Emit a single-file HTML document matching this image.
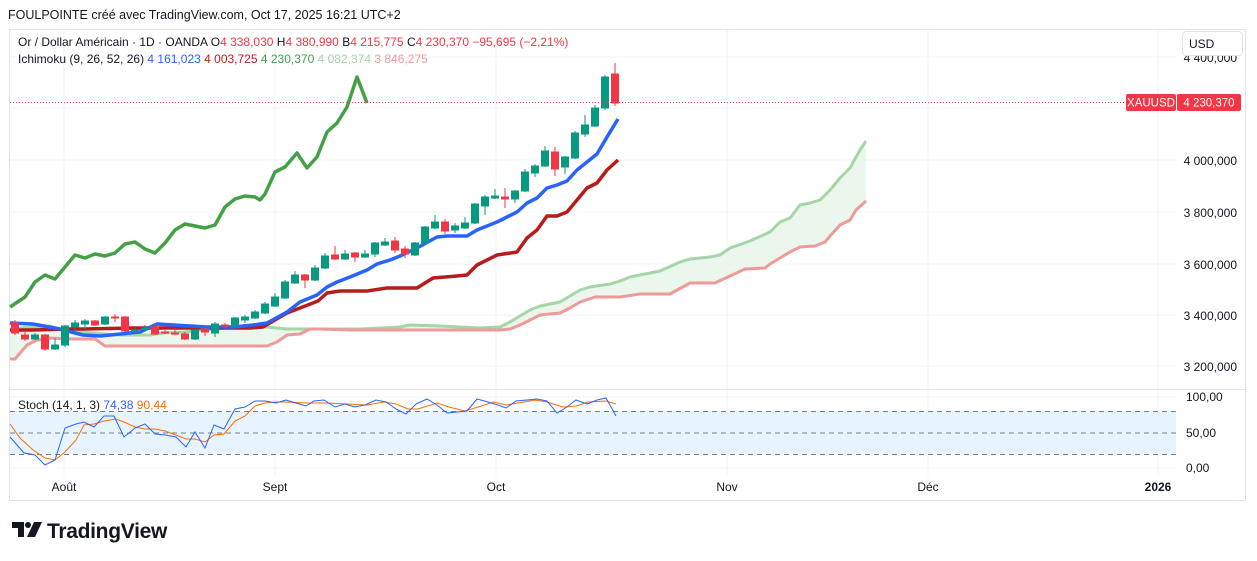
<!DOCTYPE html>
<html><head><meta charset="utf-8"><style>
body{margin:0;width:1257px;height:561px;background:#fff;overflow:hidden;font-family:"Liberation Sans",sans-serif;}
svg{position:absolute;left:0;top:0}
</style></head><body>
<svg width="1257" height="561" viewBox="0 0 1257 561" font-family="Liberation Sans, sans-serif">
<text x="8" y="19" font-size="12.5" fill="#131722">FOULPOINTE créé avec TradingView.com, Oct 17, 2025 16:21 UTC+2</text>
<rect x="9.5" y="29.5" width="1236" height="471" fill="none" stroke="#e0e3eb"/>
<g stroke="#f0f3fa" stroke-width="1">
<line x1="10" y1="57" x2="1176" y2="57"/><line x1="10" y1="108" x2="1176" y2="108"/><line x1="10" y1="160" x2="1176" y2="160"/><line x1="10" y1="212" x2="1176" y2="212"/><line x1="10" y1="264" x2="1176" y2="264"/><line x1="10" y1="315" x2="1176" y2="315"/><line x1="10" y1="366" x2="1176" y2="366"/>
<line x1="10" y1="397" x2="1176" y2="397"/><line x1="10" y1="468" x2="1176" y2="468"/>
<line x1="64" y1="30" x2="64" y2="475"/><line x1="275" y1="30" x2="275" y2="475"/><line x1="496" y1="30" x2="496" y2="475"/><line x1="727" y1="30" x2="727" y2="475"/><line x1="928" y1="30" x2="928" y2="475"/><line x1="1158" y1="30" x2="1158" y2="475"/>
</g>
<line x1="10" y1="389.5" x2="1245" y2="389.5" stroke="#e0e3eb"/>
<polygon fill="#e8f5e9" fill-opacity="0.85" points="10,330 20,328 33,327 50,326 60,330 83,332 117,335 150,335 163,333 183,332 217,329 233,327 267,327 277,328 287,329 318,329 330,329 360,329 400,327 410,325 440,326 480,328 500,327 510,322 520,316 530,310 540,306 560,302 570,296 580,290 590,287 610,284 620,281 630,277 650,273 660,271 680,262 690,259 710,257 720,255 730,248 750,241 770,232 780,222 790,218 800,205 810,203 820,200 830,190 840,178 850,168 860,150 866,141 866,201 856,210 850,220 840,225 830,236 825,242 815,246 800,247 790,252 780,258 770,264 765,268 745,269 730,276 715,283 690,283 670,294 640,294 620,297 595,297 580,302 570,308 560,313 540,315 530,320 520,325 510,329 500,330 350,330 320,329 310,329 300,334 287,335 277,342 267,346 105,346 95,339 67,339 50,338 37,340 27,345 15,359 10,359"/>
<polyline fill="none" stroke="#a5d6a7" stroke-width="3" stroke-linejoin="round" points="10,330 20,328 33,327 50,326 60,330 83,332 117,335 150,335 163,333 183,332 217,329 233,327 267,327 277,328 287,329 318,329 330,329 360,329 400,327 410,325 440,326 480,328 500,327 510,322 520,316 530,310 540,306 560,302 570,296 580,290 590,287 610,284 620,281 630,277 650,273 660,271 680,262 690,259 710,257 720,255 730,248 750,241 770,232 780,222 790,218 800,205 810,203 820,200 830,190 840,178 850,168 860,150 866,141"/>
<polyline fill="none" stroke="#ef9a9a" stroke-width="3" stroke-linejoin="round" points="10,359 15,359 27,345 37,340 50,338 67,339 95,339 105,346 267,346 277,342 287,335 300,334 310,329 320,329 350,330 500,330 510,329 520,325 530,320 540,315 560,313 570,308 580,302 595,297 620,297 640,294 670,294 690,283 715,283 730,276 745,269 765,268 770,264 780,258 790,252 800,247 815,246 825,242 830,236 840,225 850,220 856,210 866,201"/>
<polyline fill="none" stroke="#43a047" stroke-width="3.5" stroke-linejoin="round" points="10,307 25,297 35,282 45,275 55,279 75,255 85,258 95,254 105,256 115,253 125,244 135,242 145,249 155,253 165,243 175,230 185,224 195,226 205,228 215,225 225,207 235,199 245,196 255,197 260,200 265,194 275,172 285,167 297,153 307,168 317,157 327,132 337,123 347,107 357,77 367,103"/>
<polyline fill="none" stroke="#b71c1c" stroke-width="3.5" stroke-linejoin="round" points="10,330 33,330 67,329 83,329 133,328 200,328 250,328 263,327 287,313 300,308 318,301 327,293 340,291 367,291 387,288 417,288 433,278 457,276 467,275 477,265 497,255 517,252 527,238 537,230 547,216 557,216 567,212 577,200 587,188 597,183 607,170 618,160"/>
<polyline fill="none" stroke="#2962ff" stroke-width="3.5" stroke-linejoin="round" points="10,323 33,324 60,329 83,335 100,336 140,332 157,324 207,327 233,327 253,325 267,323 287,312 300,302 317,295 327,287 337,282 350,277 367,270 377,264 390,260 400,256 417,248 437,237 447,236 467,236 477,230 487,226 497,222 507,217 517,212 527,203 537,198 547,188 557,185 567,181 577,170 587,162 597,154 607,137 618,119"/>
<g stroke-width="1">
<g stroke="#f23645" fill="#f23645"><line x1="15" y1="320" x2="15" y2="335"/><rect x="11.5" y="323" width="7" height="10"/></g>
<g stroke="#f23645" fill="#f23645"><line x1="25" y1="332" x2="25" y2="341"/><rect x="21.5" y="335" width="7" height="4"/></g>
<g stroke="#089981" fill="#089981"><line x1="35" y1="333" x2="35" y2="340"/><rect x="31.5" y="335" width="7" height="4"/></g>
<g stroke="#f23645" fill="#f23645"><line x1="45" y1="334" x2="45" y2="351"/><rect x="41.5" y="335" width="7" height="14"/></g>
<g stroke="#089981" fill="#089981"><line x1="55" y1="338" x2="55" y2="350"/><rect x="51.5" y="345" width="7" height="4"/></g>
<g stroke="#089981" fill="#089981"><line x1="65" y1="325" x2="65" y2="347"/><rect x="61.5" y="326" width="7" height="19"/></g>
<g stroke="#089981" fill="#089981"><line x1="75" y1="320" x2="75" y2="331"/><rect x="71.5" y="323" width="7" height="4"/></g>
<g stroke="#089981" fill="#089981"><line x1="85" y1="319" x2="85" y2="329"/><rect x="81.5" y="321" width="7" height="3"/></g>
<g stroke="#f23645" fill="#f23645"><line x1="95" y1="320" x2="95" y2="326"/><rect x="91.5" y="321" width="7" height="4"/></g>
<g stroke="#089981" fill="#089981"><line x1="105" y1="316" x2="105" y2="325"/><rect x="101.5" y="317" width="7" height="7"/></g>
<g stroke="#f23645" fill="#f23645"><line x1="115" y1="314" x2="115" y2="322"/><rect x="111.5" y="317" width="7" height="1"/></g>
<g stroke="#f23645" fill="#f23645"><line x1="125" y1="316" x2="125" y2="332"/><rect x="121.5" y="317" width="7" height="14"/></g>
<g stroke="#089981" fill="#089981"><line x1="135" y1="327" x2="135" y2="333"/><rect x="131.5" y="330" width="7" height="1"/></g>
<g stroke="#089981" fill="#089981"><line x1="145" y1="325" x2="145" y2="330"/><rect x="141.5" y="328" width="7" height="1.5"/></g>
<g stroke="#f23645" fill="#f23645"><line x1="155" y1="323" x2="155" y2="335"/><rect x="151.5" y="327" width="7" height="7"/></g>
<g stroke="#f23645" fill="#f23645"><line x1="165" y1="329" x2="165" y2="334"/><rect x="161.5" y="332" width="7" height="1"/></g>
<g stroke="#f23645" fill="#f23645"><line x1="175" y1="328" x2="175" y2="335"/><rect x="171.5" y="333" width="7" height="1"/></g>
<g stroke="#f23645" fill="#f23645"><line x1="185" y1="332" x2="185" y2="340"/><rect x="181.5" y="334" width="7" height="5"/></g>
<g stroke="#089981" fill="#089981"><line x1="195" y1="329" x2="195" y2="340"/><rect x="191.5" y="330" width="7" height="9"/></g>
<g stroke="#f23645" fill="#f23645"><line x1="205" y1="328" x2="205" y2="336"/><rect x="201.5" y="329" width="7" height="3"/></g>
<g stroke="#089981" fill="#089981"><line x1="215" y1="322" x2="215" y2="337"/><rect x="211.5" y="324" width="7" height="9"/></g>
<g stroke="#f23645" fill="#f23645"><line x1="225" y1="323" x2="225" y2="328"/><rect x="221.5" y="325" width="7" height="1"/></g>
<g stroke="#089981" fill="#089981"><line x1="235" y1="317" x2="235" y2="327"/><rect x="231.5" y="318" width="7" height="8"/></g>
<g stroke="#089981" fill="#089981"><line x1="245" y1="315" x2="245" y2="323"/><rect x="241.5" y="317" width="7" height="3"/></g>
<g stroke="#089981" fill="#089981"><line x1="255" y1="310" x2="255" y2="319"/><rect x="251.5" y="312" width="7" height="6"/></g>
<g stroke="#089981" fill="#089981"><line x1="265" y1="302" x2="265" y2="314"/><rect x="261.5" y="304" width="7" height="9"/></g>
<g stroke="#089981" fill="#089981"><line x1="275" y1="293" x2="275" y2="307"/><rect x="271.5" y="297" width="7" height="9"/></g>
<g stroke="#089981" fill="#089981"><line x1="285" y1="280" x2="285" y2="299"/><rect x="281.5" y="282" width="7" height="16"/></g>
<g stroke="#089981" fill="#089981"><line x1="295" y1="271" x2="295" y2="284"/><rect x="291.5" y="275" width="7" height="8"/></g>
<g stroke="#f23645" fill="#f23645"><line x1="305" y1="274" x2="305" y2="288"/><rect x="301.5" y="275" width="7" height="5"/></g>
<g stroke="#089981" fill="#089981"><line x1="315" y1="265" x2="315" y2="281"/><rect x="311.5" y="268" width="7" height="12"/></g>
<g stroke="#089981" fill="#089981"><line x1="325" y1="253" x2="325" y2="269"/><rect x="321.5" y="256" width="7" height="12"/></g>
<g stroke="#f23645" fill="#f23645"><line x1="335" y1="246" x2="335" y2="260"/><rect x="331.5" y="255" width="7" height="4"/></g>
<g stroke="#089981" fill="#089981"><line x1="345" y1="250" x2="345" y2="260"/><rect x="341.5" y="254" width="7" height="5"/></g>
<g stroke="#f23645" fill="#f23645"><line x1="355" y1="252" x2="355" y2="262"/><rect x="351.5" y="253" width="7" height="4"/></g>
<g stroke="#089981" fill="#089981"><line x1="365" y1="250" x2="365" y2="258"/><rect x="361.5" y="254" width="7" height="3"/></g>
<g stroke="#089981" fill="#089981"><line x1="375" y1="242" x2="375" y2="257"/><rect x="371.5" y="243" width="7" height="11"/></g>
<g stroke="#089981" fill="#089981"><line x1="385" y1="238" x2="385" y2="246"/><rect x="381.5" y="242" width="7" height="3"/></g>
<g stroke="#f23645" fill="#f23645"><line x1="395" y1="237" x2="395" y2="253"/><rect x="391.5" y="241" width="7" height="9"/></g>
<g stroke="#f23645" fill="#f23645"><line x1="405" y1="246" x2="405" y2="258"/><rect x="401.5" y="249" width="7" height="5"/></g>
<g stroke="#089981" fill="#089981"><line x1="415" y1="242" x2="415" y2="256"/><rect x="411.5" y="243" width="7" height="12"/></g>
<g stroke="#089981" fill="#089981"><line x1="425" y1="226" x2="425" y2="244"/><rect x="421.5" y="227" width="7" height="16"/></g>
<g stroke="#089981" fill="#089981"><line x1="435" y1="215" x2="435" y2="229"/><rect x="431.5" y="222" width="7" height="6"/></g>
<g stroke="#f23645" fill="#f23645"><line x1="445" y1="219" x2="445" y2="234"/><rect x="441.5" y="222" width="7" height="9"/></g>
<g stroke="#089981" fill="#089981"><line x1="455" y1="223" x2="455" y2="233"/><rect x="451.5" y="226" width="7" height="4"/></g>
<g stroke="#089981" fill="#089981"><line x1="465" y1="217" x2="465" y2="229"/><rect x="461.5" y="223" width="7" height="5"/></g>
<g stroke="#089981" fill="#089981"><line x1="475" y1="203" x2="475" y2="224"/><rect x="471.5" y="204" width="7" height="19"/></g>
<g stroke="#089981" fill="#089981"><line x1="485" y1="195" x2="485" y2="215"/><rect x="481.5" y="197" width="7" height="9"/></g>
<g stroke="#089981" fill="#089981"><line x1="495" y1="189" x2="495" y2="199"/><rect x="491.5" y="196" width="7" height="2"/></g>
<g stroke="#f23645" fill="#f23645"><line x1="505" y1="188" x2="505" y2="208"/><rect x="501.5" y="197" width="7" height="2"/></g>
<g stroke="#089981" fill="#089981"><line x1="515" y1="190" x2="515" y2="203"/><rect x="511.5" y="191" width="7" height="8"/></g>
<g stroke="#089981" fill="#089981"><line x1="525" y1="169" x2="525" y2="192"/><rect x="521.5" y="172" width="7" height="19"/></g>
<g stroke="#089981" fill="#089981"><line x1="535" y1="164" x2="535" y2="177"/><rect x="531.5" y="166" width="7" height="7"/></g>
<g stroke="#089981" fill="#089981"><line x1="545" y1="146" x2="545" y2="167"/><rect x="541.5" y="151" width="7" height="15"/></g>
<g stroke="#f23645" fill="#f23645"><line x1="555" y1="147" x2="555" y2="176"/><rect x="551.5" y="152" width="7" height="17"/></g>
<g stroke="#089981" fill="#089981"><line x1="565" y1="156" x2="565" y2="174"/><rect x="561.5" y="157" width="7" height="10"/></g>
<g stroke="#089981" fill="#089981"><line x1="575" y1="131" x2="575" y2="159"/><rect x="571.5" y="133" width="7" height="25"/></g>
<g stroke="#089981" fill="#089981"><line x1="585" y1="115" x2="585" y2="137"/><rect x="581.5" y="125" width="7" height="9"/></g>
<g stroke="#089981" fill="#089981"><line x1="595" y1="105" x2="595" y2="127"/><rect x="591.5" y="108" width="7" height="18"/></g>
<g stroke="#089981" fill="#089981"><line x1="605" y1="75" x2="605" y2="110"/><rect x="601.5" y="77" width="7" height="31"/></g>
<g stroke="#f23645" fill="#f23645"><line x1="615" y1="63" x2="615" y2="106"/><rect x="611.5" y="74" width="7" height="29"/></g>
</g>
<line x1="10" y1="102.5" x2="1126" y2="102.5" stroke="#f23645" stroke-dasharray="1,2"/>
<rect x="1126" y="94" width="50" height="17" rx="2" fill="#f23645"/>
<text x="1151" y="106.5" font-size="11.5" fill="#fff" text-anchor="middle">XAUUSD</text>
<rect x="1177" y="94" width="64" height="17" rx="2" fill="#f23645"/>
<text x="1209" y="106.5" font-size="11.5" fill="#fff" text-anchor="middle">4 230,370</text>
<text x="18" y="46" font-size="12" fill="#131722">Or / Dollar Américain · 1D · OANDA <tspan fill="#131722">O</tspan><tspan fill="#f23645">4 338,030</tspan> <tspan fill="#131722">H</tspan><tspan fill="#f23645">4 380,990</tspan> <tspan fill="#131722">B</tspan><tspan fill="#f23645">4 215,775</tspan> <tspan fill="#131722">C</tspan><tspan fill="#f23645">4 230,370</tspan> <tspan fill="#f23645">−95,695 (−2,21%)</tspan></text>
<text x="18" y="63" font-size="12" fill="#131722">Ichimoku (9, 26, 52, 26) <tspan fill="#2962ff">4 161,023</tspan>  <tspan fill="#b71c1c">4 003,725</tspan>  <tspan fill="#43a047">4 230,370</tspan>  <tspan fill="#a5d6a7">4 082,374</tspan>  <tspan fill="#ef9a9a">3 846,275</tspan></text>
<g font-size="12" fill="#131722" text-anchor="end">
<text x="1237" y="62">4 400,000</text>
<text x="1237" y="165">4 000,000</text>
<text x="1237" y="217">3 800,000</text>
<text x="1237" y="269">3 600,000</text>
<text x="1237" y="320">3 400,000</text>
<text x="1237" y="371">3 200,000</text>
</g>
<rect x="1182.5" y="31.5" width="60" height="24" rx="4" fill="#fff" stroke="#e0e3eb"/>
<text x="1189" y="48" font-size="12" fill="#131722">USD</text>
<g font-size="12" fill="#131722">
<text x="1186" y="401">100,00</text><text x="1186" y="437">50,00</text><text x="1186" y="472">0,00</text>
</g>
<rect x="10" y="411" width="1166" height="43" fill="#e3f2fd" fill-opacity="0.85"/>
<g stroke="#787b86" stroke-dasharray="5,4" stroke-width="1">
<line x1="10" y1="411.5" x2="1176" y2="411.5"/><line x1="10" y1="433" x2="1176" y2="433"/><line x1="10" y1="454.5" x2="1176" y2="454.5"/>
</g>
<polyline fill="none" stroke="#ff6d00" stroke-width="1" points="10,424 20,438 33,450 45,458 55,460 65,452 76,440 84,425 94,424 104,421 116,419 124,422 135,427 145,429 155,429 165,431 176,435 186,439 195,439 205,442 214,435 224,434 235,421 245,416 255,406 265,403 276,402 286,402 306,403 327,403 347,404 367,405 384,402 396,404 408,409 418,409 437,403 449,407 465,411 478,407 494,402 506,405 518,403 535,400 547,402 563,407 576,406 588,402 606,401 616,404"/>
<polyline fill="none" stroke="#2962ff" stroke-width="1" points="10,437 24,453 35,455 45,465 55,460 65,428 76,424 84,422 94,427 104,416 114,416 124,437 135,428 145,424 155,434 165,435 176,437 186,447 195,432 205,448 214,425 224,429 235,409 245,407 255,401 265,401 276,403 286,400 296,403 306,406 314,401 324,400 335,407 345,404 355,407 365,405 376,400 386,402 396,409 406,414 416,404 427,399 437,405 447,413 457,412 467,411 477,399 488,402 498,405 506,408 516,401 527,400 537,399 547,401 557,413 567,407 576,400 587,404 597,400 606,398 616,416"/>
<text x="18" y="409" font-size="12" fill="#131722">Stoch (14, 1, 3) <tspan fill="#2962ff">74,38</tspan> <tspan fill="#ff6d00">90,44</tspan></text>
<g font-size="12" fill="#131722" text-anchor="middle">
<text x="64" y="491">Août</text><text x="275" y="491">Sept</text><text x="496" y="491">Oct</text><text x="727" y="491">Nov</text><text x="928" y="491">Déc</text><text x="1158" y="491" font-weight="bold">2026</text>
</g>
<g fill="#131722">
<path d="M12 522h12v15h-6v-9h-6z"/>
<circle cx="28" cy="525" r="3"/>
<path d="M34 522h8l-7 15h-8z"/>
</g>
<text x="47" y="538" font-size="21" font-weight="bold" fill="#131722" letter-spacing="-0.3">TradingView</text>
</svg>
</body></html>
